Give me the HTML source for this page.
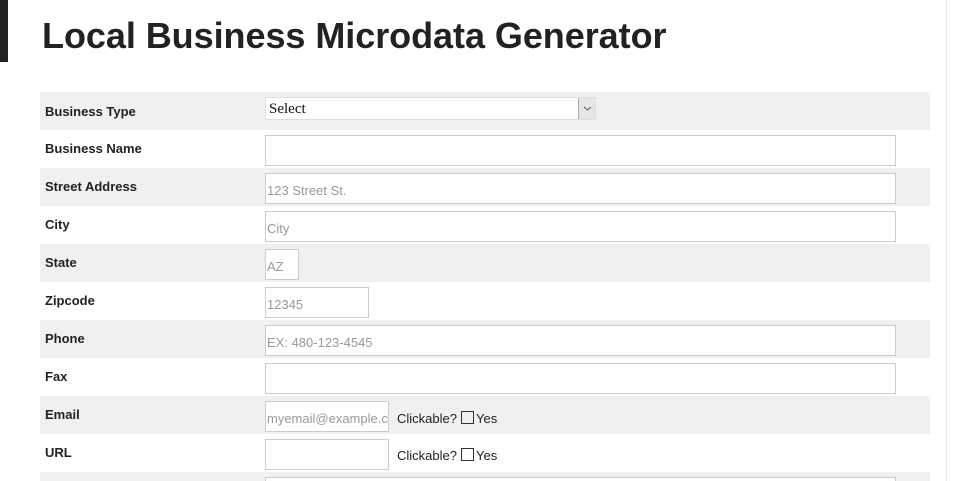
<!DOCTYPE html>
<html style="overflow:hidden;height:481px"><head><meta charset="utf-8"><style>
body{margin:0;width:961px;height:481px;overflow:hidden;background:#fff;font-family:"Liberation Sans",Arial,sans-serif;position:relative}
.bar{position:absolute;left:0;top:0;width:8px;height:62px;background:#222}
.vl{position:absolute;left:946px;top:0;width:1px;height:481px;background:#e6e6e6}
h1{position:absolute;left:42px;top:15px;margin:0;font-size:36px;font-weight:bold;color:#222;letter-spacing:-0.05px}
.row{position:absolute;left:40px;width:890px;height:38px}
.g{background:#f0f0f0}
.lbl{position:absolute;left:5px;top:11px;font-size:13px;font-weight:bold;color:#222}
.in{position:absolute;left:225px;top:5px;border:1px solid #ccc;background:#fff;box-sizing:border-box;height:31px;font-size:13px;color:#999;padding:9px 0 0 1px;white-space:nowrap;overflow:hidden}
.ck{position:absolute;left:357px;top:15px;font-size:13px;color:#222}
.ck i{display:inline-block;width:11px;height:11px;border:1px solid #333;vertical-align:-1px;margin:0 2px 0 4px}
.sel{position:absolute;left:225px;top:5px;width:331px;height:23px;border:1px solid #ddd;background:#fff;box-sizing:border-box;font-family:"Liberation Serif",serif;font-size:15px;color:#111;padding:3px 0 0 3px}
.sel b{position:absolute;right:0;top:0;width:17px;height:21px;background:#e6e6e6;border-left:1px solid #aaa;box-sizing:border-box}
</style></head><body>
<div class="bar"></div><div class="vl"></div>
<h1>Local Business Microdata Generator</h1>
<div class="row g" style="top:92px"><div class="lbl" style="top:12px">Business Type</div><div class="sel">Select<b><svg width="17" height="21"><path d="M5 9l3.5 3 3.5-3" stroke="#555" fill="none"/></svg></b></div></div>
<div class="row" style="top:130px"><div class="lbl">Business Name</div><div class="in" style="width:631px"></div></div>
<div class="row g" style="top:168px"><div class="lbl">Street Address</div><div class="in" style="width:631px">123 Street St.</div></div>
<div class="row" style="top:206px"><div class="lbl">City</div><div class="in" style="width:631px">City</div></div>
<div class="row g" style="top:244px"><div class="lbl">State</div><div class="in" style="width:34px">AZ</div></div>
<div class="row" style="top:282px"><div class="lbl">Zipcode</div><div class="in" style="width:104px">12345</div></div>
<div class="row g" style="top:320px"><div class="lbl">Phone</div><div class="in" style="width:631px">EX: 480-123-4545</div></div>
<div class="row" style="top:358px"><div class="lbl">Fax</div><div class="in" style="width:631px"></div></div>
<div class="row g" style="top:396px"><div class="lbl">Email</div><div class="in" style="width:124px">myemail@example.com</div><div class="ck">Clickable?<i></i>Yes</div></div>
<div class="row" style="top:434px"><div class="lbl">URL</div><div class="in" style="width:124px"></div><div class="ck" style="top:14px">Clickable?<i></i>Yes</div></div>
<div class="row g" style="top:472px;height:9px;overflow:hidden"><div class="in" style="width:631px"></div></div>
</body></html>
